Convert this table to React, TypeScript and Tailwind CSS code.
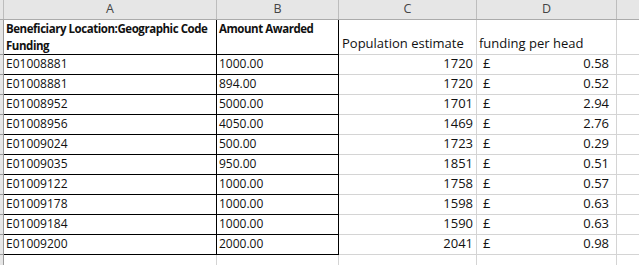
import React from "react";

const rows: [string, string, string, string][] = [
  ["E01008881", "1000.00", "1720", "0.58"],
  ["E01008881", "894.00", "1720", "0.52"],
  ["E01008952", "5000.00", "1701", "2.94"],
  ["E01008956", "4050.00", "1469", "2.76"],
  ["E01009024", "500.00", "1723", "0.29"],
  ["E01009035", "950.00", "1851", "0.51"],
  ["E01009122", "1000.00", "1758", "0.57"],
  ["E01009178", "1000.00", "1598", "0.63"],
  ["E01009184", "1000.00", "1590", "0.63"],
  ["E01009200", "2000.00", "2041", "0.98"],
];

const font = { fontFamily: "'Open Sans', 'Liberation Sans', sans-serif" };

export default function App() {
  return (
    <div
      className="w-[639px] h-[265px] overflow-hidden bg-white text-[12px] leading-none text-[#111]"
      style={font}
    >
      {/* column headers */}
      <div className="flex h-[20px] bg-[#e6e6e6] border-b border-[#ababab] text-[#444] text-[12.5px]">
        <div className="w-[4px] shrink-0 border-r border-[#bdbdbd]" />
        <div className="w-[213px] shrink-0 border-r border-[#bdbdbd] flex items-center justify-center">A</div>
        <div className="w-[122px] shrink-0 border-r border-[#bdbdbd] flex items-center justify-center">B</div>
        <div className="w-[138px] shrink-0 border-r border-[#bdbdbd] flex items-center justify-center">C</div>
        <div className="w-[140px] shrink-0 border-r border-[#bdbdbd] flex items-center justify-center">D</div>
        <div className="flex-1" />
      </div>

      {/* header row */}
      <div className="flex h-[35px]">
        <div className="w-[4px] shrink-0 bg-[#e6e6e6] border-r border-b border-[#9a9a9a]" />
        <div className="w-[213px] shrink-0 border-r border-b border-black pl-[2px] font-bold text-[11.5px] tracking-[-0.45px] leading-[17px] whitespace-nowrap overflow-hidden">
          Beneficiary Location:Geographic Code
          <br />
          Funding
        </div>
        <div className="w-[122px] shrink-0 border-r border-b border-black pl-[2px] font-bold text-[11.5px] tracking-[-0.45px] leading-[17px] whitespace-nowrap overflow-hidden">
          Amount Awarded
        </div>
        <div className="w-[138px] shrink-0 border-r border-b border-[#d4d4d4] pl-[3px] pb-[4px] flex items-end text-[13px]">
          Population estimate
        </div>
        <div className="w-[140px] shrink-0 border-r border-b border-[#d4d4d4] pl-[2px] pb-[4px] flex items-end text-[13px]">
          funding per head
        </div>
        <div className="flex-1 border-b border-[#d4d4d4]" />
      </div>

      {rows.map(([code, amt, pop, per], i) => (
        <div key={i} className="flex h-[20px]">
          <div className="w-[4px] shrink-0 bg-[#e6e6e6] border-r border-b border-[#9a9a9a]" />
          <div className="w-[213px] shrink-0 border-r border-b border-black pl-[2px] pb-[4px] flex items-end">
            {code}
          </div>
          <div className="w-[122px] shrink-0 border-r border-b border-black pl-[2px] pb-[4px] flex items-end">
            {amt}
          </div>
          <div className="w-[138px] shrink-0 border-r border-b border-[#d4d4d4] pr-[3px] pb-[4px] flex items-end justify-end text-[13px]">
            {pop}
          </div>
          <div className="w-[140px] shrink-0 border-r border-b border-[#d4d4d4] pl-[6px] pr-[7px] pb-[4px] flex items-end justify-between text-[13px]">
            <span>£</span>
            <span>{per}</span>
          </div>
          <div className="flex-1 border-b border-[#d4d4d4]" />
        </div>
      ))}

      <div className="flex h-[20px]">
        <div className="w-[4px] shrink-0 bg-[#e6e6e6] border-r border-[#9a9a9a]" />
        <div className="w-[213px] shrink-0 border-r border-[#d4d4d4]" />
        <div className="w-[122px] shrink-0 border-r border-[#d4d4d4]" />
        <div className="w-[138px] shrink-0 border-r border-[#d4d4d4]" />
        <div className="w-[140px] shrink-0 border-r border-[#d4d4d4]" />
        <div className="flex-1" />
      </div>
    </div>
  );
}
